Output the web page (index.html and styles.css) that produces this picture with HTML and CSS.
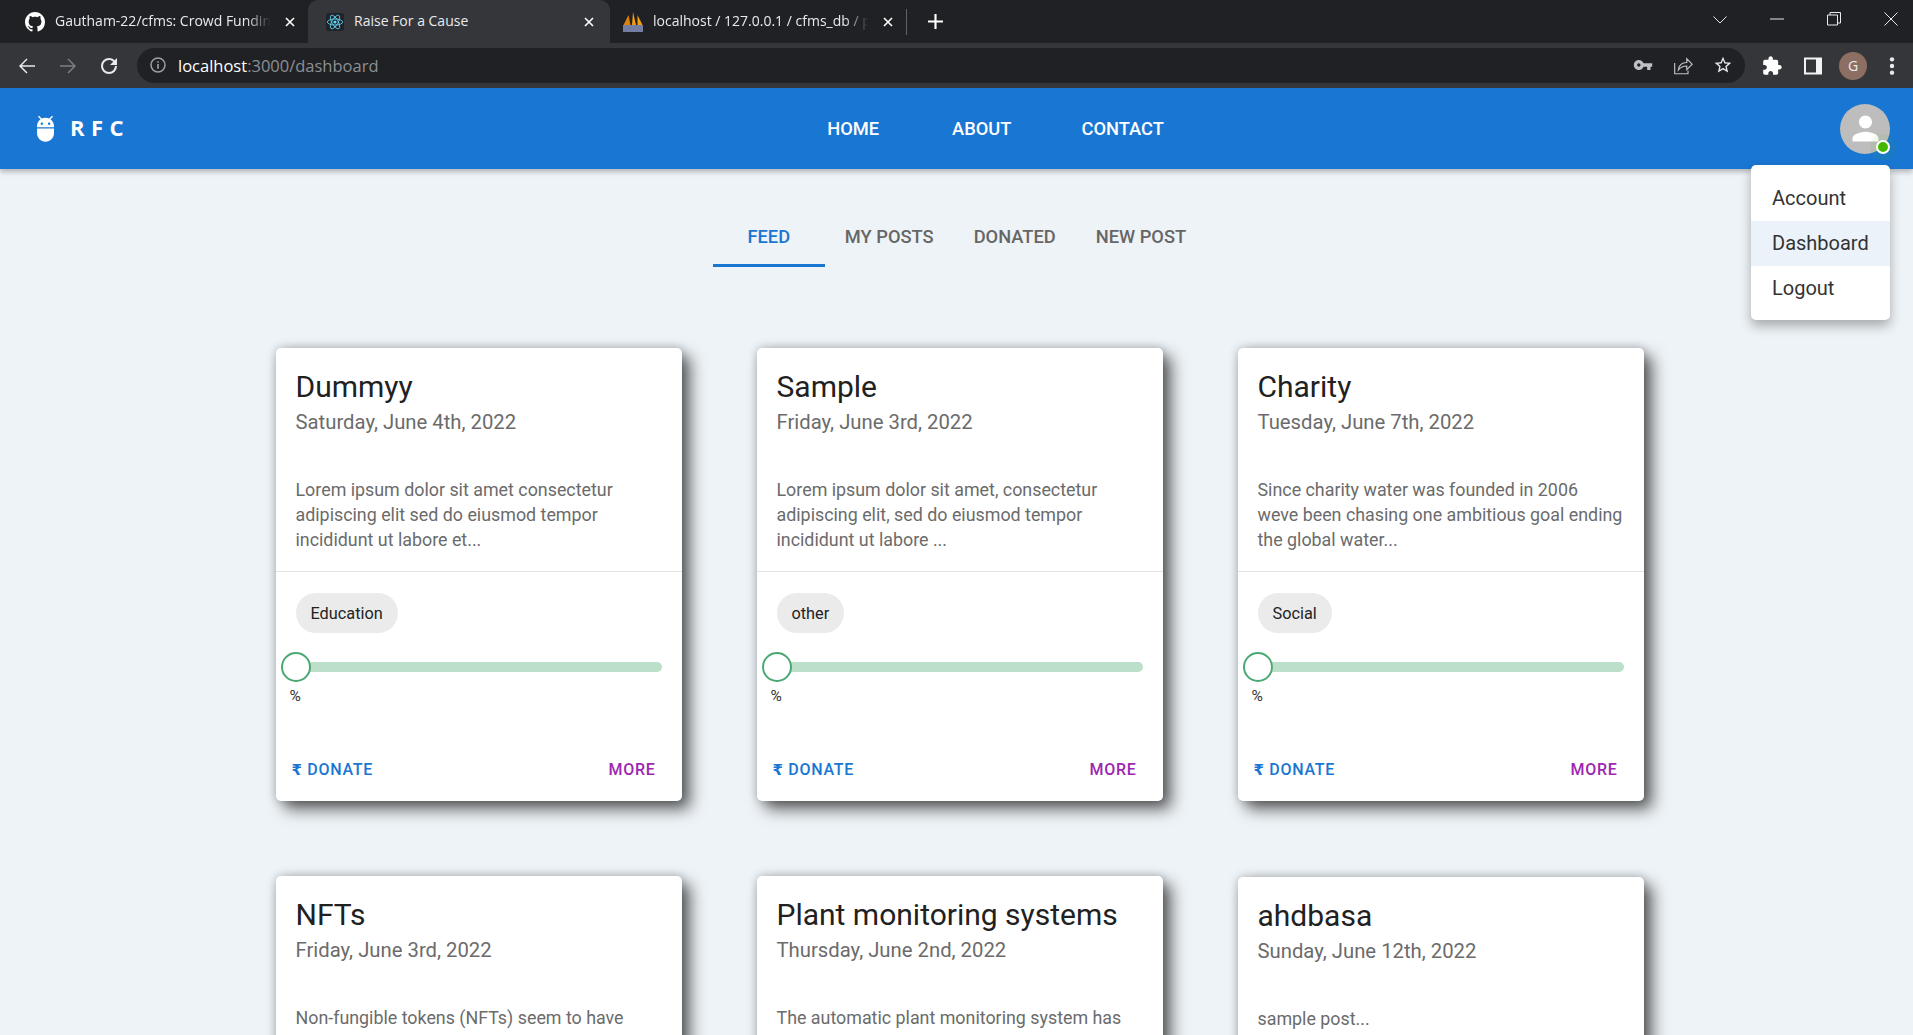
FILE: index.html
```html
<!DOCTYPE html>
<html lang="en">

<head>
    <meta charset="UTF-8">
    <title>Raise For a Cause</title>
    <link rel="stylesheet" href="styles.css">
</head>

<body>
    <div class="browser">
        <div class="tabstrip">
            <div class="btab btab-first">
                <svg class="favicon" viewBox="0 0 16 16"><path fill="#fff" d="M8 0C3.580 0 0 3.580 0 8c0 3.540 2.290 6.530 5.470 7.590.4.070.55-.17.55-.38 0-.19-.01-.82-.01-1.490-2.010.37-2.530-.49-2.690-.94-.09-.23-.48-.94-.82-1.130-.28-.15-.68-.52-.01-.53.63-.01 1.080.58 1.230.82.72 1.210 1.870.87 2.330.66.07-.52.28-.87.51-1.070-1.780-.2-3.640-.89-3.640-3.950 0-.87.31-1.590.82-2.150-.08-.2-.36-1.020.08-2.120 0 0 .67-.21 2.200.82.64-.18 1.320-.27 2-.27.68 0 1.360.09 2 .27 1.530-1.040 2.200-.82 2.200-.82.44 1.100.16 1.920.08 2.120.51.56.82 1.270.82 2.150 0 3.070-1.870 3.750-3.650 3.950.29.25.54.73.54 1.480 0 1.070-.01 1.930-.01 2.200 0 .21.15.46.55.38A8.013 8.013 0 0016 8c0-4.420-3.580-8-8-8z"/></svg>
                <span class="btab-title">Gautham-22/cfms: Crowd Fundin</span>
                <svg class="btab-x" viewBox="0 0 10 10"><path d="M1 1l8 8M9 1l-8 8"/></svg>
            </div>
            <div class="btab btab-active">
                <svg class="favicon react" viewBox="0 0 20 20">
                    <rect width="20" height="20" rx="3" fill="#20232a"/>
                    <circle cx="10" cy="10" r="1.700" fill="#61dafb"/>
                    <g fill="none" stroke="#61dafb" stroke-width=".9">
                        <ellipse cx="10" cy="10" rx="8.500" ry="3.400"/>
                        <ellipse cx="10" cy="10" rx="8.500" ry="3.400" transform="rotate(60 10 10)"/>
                        <ellipse cx="10" cy="10" rx="8.500" ry="3.400" transform="rotate(120 10 10)"/>
                    </g>
                </svg>
                <span class="btab-title">Raise For a Cause</span>
                <svg class="btab-x" viewBox="0 0 10 10"><path d="M1 1l8 8M9 1l-8 8"/></svg>
            </div>
            <div class="btab btab-last">
                <svg class="favicon" viewBox="0 0 20 20">
                    <path fill="#f89c0e" d="M10 0l3 13H9zM14.500 3l5 10h-5z"/>
                    <path fill="#d9820c" d="M5.500 3l2 10H.5z"/>
                    <rect y="13" width="20" height="7" fill="#747ea0"/>
                </svg>
                <span class="btab-title">localhost / 127.0.0.1 / cfms_db / p</span>
                <svg class="btab-x" viewBox="0 0 10 10"><path d="M1 1l8 8M9 1l-8 8"/></svg>
            </div>
            <svg class="newtab" viewBox="0 0 14 14"><path d="M7 0v14M0 7h14"/></svg>
            <div class="winctl">
                <svg class="winicon chevron" viewBox="0 0 14 14"><path d="M.5 3.500L7 10l6.500-6.500"/></svg>
                <svg class="winicon" viewBox="0 0 14 14"><path d="M0 7h14"/></svg>
                <svg class="winicon" viewBox="0 0 14 14"><path d="M.5 3h10v10H.5zM3 3V.5h10.500V11H10.500"/></svg>
                <svg class="winicon" viewBox="0 0 14 14"><path d="M.5.5l13 13M13.500.5l-13 13"/></svg>
            </div>
        </div>
        <div class="toolbar">
            <svg class="tool" viewBox="0 0 24 24"><path fill="#e8eaed" d="M20 11.200H6.800l5.700-5.700-1-1L4 12l7.500 7.500 1-1-5.700-5.700H20z"/></svg>
            <svg class="tool" viewBox="0 0 24 24"><path fill="#7c7f84" d="M4 11.200h13.200l-5.700-5.700 1-1L20 12l-7.500 7.500-1-1 5.700-5.700H4z"/></svg>
            <svg class="tool" viewBox="0 0 24 24"><path fill="#e8eaed" d="M17.650 6.350A7.960 7.960 0 0012 4a8 8 0 108 8h-2a6 6 0 11-6-6c1.660 0 3.140.69 4.220 1.780L13 11h7V4z"/></svg>
            <div class="omnibox">
                <svg class="omni-info" viewBox="0 0 16 16">
                    <circle cx="8" cy="8" r="7" fill="none" stroke="#9aa0a6" stroke-width="1.500"/>
                    <path fill="#9aa0a6" d="M7.200 7h1.600v4.800H7.200zM7.200 4.200h1.600v1.600H7.200z"/>
                </svg>
                <span class="url"><span class="url-host">localhost</span>:3000/dashboard</span>
                <div class="omni-actions">
                    <svg class="omni-icon" viewBox="0 0 24 24"><path fill="#bdc1c6" d="M12.650 10C11.830 7.670 9.610 6 7 6c-3.310 0-6 2.690-6 6s2.690 6 6 6c2.610 0 4.830-1.670 5.650-4H17v4h4v-4h2v-4H12.650zM7 14c-1.100 0-2-.9-2-2s.9-2 2-2 2 .9 2 2-.9 2-2 2z"/></svg>
                    <svg class="omni-icon" viewBox="0 0 24 24"><path fill="none" stroke="#bdc1c6" stroke-width="1.400" d="M2 9.500V22.500h16v-4M6.500 18c.6-5.500 4.500-9 10-9V4.500l6.500 6.500-6.500 6.500v-4.300c-4.400 0-7.600 1.500-10 4.800z"/></svg>
                    <svg class="omni-icon" viewBox="0 0 24 24"><path fill="#e8eaed" d="M22 9.240l-7.190-.62L12 2 9.190 8.630 2 9.240l5.460 4.730L5.820 21 12 17.270 18.180 21l-1.630-7.030L22 9.240zM12 15.400l-3.760 2.270 1-4.280-3.320-2.880 4.380-.38L12 6.100l1.710 4.040 4.380.38-3.320 2.880 1 4.280L12 15.400z"/></svg>
                </div>
            </div>
            <div class="tool-right">
                <svg class="tool puzzle" viewBox="0 0 24 24"><path fill="#fff" d="M20.500 11H19V7c0-1.100-.9-2-2-2h-4V3.500C13 2.120 11.880 1 10.500 1S8 2.120 8 3.500V5H4c-1.100 0-1.990.9-1.990 2v3.800H3.500c1.490 0 2.700 1.210 2.700 2.700s-1.210 2.700-2.700 2.700H2V20c0 1.100.9 2 2 2h3.800v-1.500c0-1.490 1.210-2.700 2.700-2.700 1.490 0 2.700 1.210 2.700 2.700V22H17c1.100 0 2-.9 2-2v-4h1.500c1.380 0 2.500-1.120 2.500-2.500S21.880 11 20.500 11z"/></svg>
                <svg class="tool" viewBox="0 0 24 24"><path fill="#f1f3f4" fill-rule="evenodd" d="M3 3.500h18v17H3zM5 5.500v13h10v-13z"/></svg>
                <span class="profile">G</span>
                <svg class="tool dots" viewBox="0 0 24 24"><circle cx="12" cy="5" r="2.300" fill="#e8eaed"/><circle cx="12" cy="12" r="2.300" fill="#e8eaed"/><circle cx="12" cy="19" r="2.300" fill="#e8eaed"/></svg>
            </div>
        </div>
    </div>

    <div class="page">
        <header class="appbar">
            <div class="logo">
                <svg class="logo-icon" viewBox="0 0 24 24"><path fill="#fff" d="M5 16c0 3.870 3.130 7 7 7s7-3.130 7-7v-4H5v4zM16.120 4.370l2.100-2.100-.82-.83-2.300 2.310C14.160 3.280 13.120 3 12 3s-2.160.28-3.090.75L6.600 1.440l-.82.83 2.100 2.100C6.140 5.640 5 7.680 5 10v1h14v-1c0-2.320-1.140-4.360-2.880-5.630zM9 9c-.55 0-1-.45-1-1s.45-1 1-1 1 .45 1 1-.45 1-1 1zm6 0c-.55 0-1-.45-1-1s.45-1 1-1 1 .45 1 1-.45 1-1 1z"/></svg>
                <span class="logo-text">RFC</span>
            </div>
            <nav class="mainnav">
                <a href="#" class="nav-home">HOME</a>
                <a href="#">ABOUT</a>
                <a href="#">CONTACT</a>
            </nav>
            <div class="avatar">
                <svg viewBox="0 0 24 24"><path fill="#fff" d="M12 12c2.210 0 4-1.790 4-4s-1.790-4-4-4-4 1.790-4 4 1.790 4 4 4zm0 2c-2.670 0-8 1.340-8 4v2h16v-2c0-2.660-5.330-4-8-4z"/></svg>
                <span class="online"></span>
            </div>
        </header>

        <ul class="usermenu">
            <li>Account</li>
            <li class="hover">Dashboard</li>
            <li>Logout</li>
        </ul>

        <div class="tabs">
            <a href="#" class="tab tab-on">FEED</a>
            <a href="#" class="tab">MY POSTS</a>
            <a href="#" class="tab">DONATED</a>
            <a href="#" class="tab">NEW POST</a>
        </div>

        <section class="grid">
            <article class="card">
                <h2>Dummyy</h2>
                <p class="date">Saturday, June 4th, 2022</p>
                <p class="desc">Lorem ipsum dolor sit amet consectetur adipiscing elit sed do eiusmod tempor incididunt ut labore et...</p>
                <hr>
                <span class="chip">Education</span>
                <div class="slider"><span class="thumb"></span></div>
                <span class="pct">%</span>
                <div class="actions">
                    <a href="#" class="donate"><span class="rupee">₹</span> DONATE</a>
                    <a href="#" class="more">MORE</a>
                </div>
            </article>
            <article class="card">
                <h2>Sample</h2>
                <p class="date">Friday, June 3rd, 2022</p>
                <p class="desc">Lorem ipsum dolor sit amet, consectetur adipiscing elit, sed do eiusmod tempor incididunt ut labore ...</p>
                <hr>
                <span class="chip">other</span>
                <div class="slider"><span class="thumb"></span></div>
                <span class="pct">%</span>
                <div class="actions">
                    <a href="#" class="donate"><span class="rupee">₹</span> DONATE</a>
                    <a href="#" class="more">MORE</a>
                </div>
            </article>
            <article class="card">
                <h2>Charity</h2>
                <p class="date">Tuesday, June 7th, 2022</p>
                <p class="desc">Since charity water was founded in 2006<br>weve been chasing one ambitious goal ending the global water...</p>
                <hr>
                <span class="chip">Social</span>
                <div class="slider"><span class="thumb"></span></div>
                <span class="pct">%</span>
                <div class="actions">
                    <a href="#" class="donate"><span class="rupee">₹</span> DONATE</a>
                    <a href="#" class="more">MORE</a>
                </div>
            </article>
            <article class="card">
                <h2>NFTs</h2>
                <p class="date">Friday, June 3rd, 2022</p>
                <p class="desc">Non-fungible tokens (NFTs) seem to have</p>
            </article>
            <article class="card">
                <h2>Plant monitoring systems</h2>
                <p class="date">Thursday, June 2nd, 2022</p>
                <p class="desc">The automatic plant monitoring system has</p>
            </article>
            <article class="card card-low">
                <h2>ahdbasa</h2>
                <p class="date">Sunday, June 12th, 2022</p>
                <p class="desc">sample post...</p>
            </article>
        </section>
    </div>
</body>

</html>
```

FILE: styles.css
```css
html,
body {
    height: 1035px;
    margin: 0;
    overflow: hidden;
}

body {
    display: flex;
    flex-direction: column;
    background: #eef3f7;
    font-family: Roboto, "Liberation Sans", sans-serif;
}

a {
    text-decoration: none;
    color: inherit;
}

/* browser frame */
.browser {
    flex: none;
    font-family: "Open Sans", Roboto, sans-serif;
}

.tabstrip {
    display: flex;
    align-items: center;
    height: 43px;
    padding-left: 8px;
    background: #202124;
}

.btab {
    display: flex;
    align-items: center;
    box-sizing: border-box;
    height: 43px;
    padding: 0 13px 0 17px;
    color: #e8eaed;
    font-size: 14px;
}

.btab-first {
    width: 300px;
}

.btab-active {
    width: 302px;
    padding: 0 16px 0 18px;
    background: #35363a;
    border-radius: 10px 10px 0 0;
}

.btab-last {
    width: 297px;
    height: 26px;
    padding-left: 13px;
    border-right: 1px solid #5f6368;
}

.favicon {
    flex: none;
    width: 20px;
    height: 20px;
    margin-right: 10px;
}

.react {
    width: 18px;
    height: 18px;
}

.btab-title {
    flex: 1;
    margin-top: -2px;
    overflow: hidden;
    white-space: nowrap;
    -webkit-mask-image: linear-gradient(to right, #000 88%, transparent 99%);
    mask-image: linear-gradient(to right, #000 88%, transparent 99%);
}

.btab-active .btab-title {
    -webkit-mask-image: none;
    mask-image: none;
}

.btab-x {
    flex: none;
    width: 10px;
    height: 10px;
    margin-left: 12px;
    fill: none;
    stroke: #fff;
    stroke-width: 1.600;
}

.newtab {
    width: 15px;
    height: 15px;
    margin-left: 21px;
    fill: none;
    stroke: #fff;
    stroke-width: 2;
}

.winctl {
    display: flex;
    align-items: center;
    gap: 43px;
    margin: -6px 15px 0 auto;
}

.winicon {
    width: 14px;
    height: 14px;
    fill: none;
    stroke: #e8eaed;
    stroke-width: 1;
}

.chevron {
    margin-top: 2px;
}

.toolbar {
    display: flex;
    align-items: center;
    gap: 17px;
    height: 45px;
    padding: 0 9px 0 15px;
    background: #35363a;
}

.tool {
    flex: none;
    width: 24px;
    height: 24px;
}

.omnibox {
    flex: 1;
    display: flex;
    align-items: center;
    height: 35px;
    margin: -1px 0 0 -1px;
    padding: 0 12px 0 13px;
    border-radius: 18px;
    background: #202124;
}

.omni-info {
    width: 16px;
    height: 16px;
    margin-right: 12px;
}

.url {
    color: #8c9095;
    font-size: 16.500px;
}

.url-host {
    color: #fff;
}

.omni-actions {
    display: flex;
    gap: 20px;
    margin-left: auto;
}

.omni-icon {
    width: 20px;
    height: 20px;
}

.tool-right {
    display: flex;
    align-items: center;
    gap: 14px;
    margin-left: -2px;
}

.puzzle {
    margin-right: 3px;
    transform: scale(.88);
}

.dots {
    margin-left: -1px;
    transform: scale(.95);
}

.profile {
    width: 28px;
    height: 28px;
    border-radius: 50%;
    background: #8d6e63;
    color: #eee;
    font-size: 14px;
    line-height: 28px;
    text-align: center;
}

/* app */
.page {
    position: relative;
    flex: 1;
    overflow: hidden;
}

.appbar {
    position: relative;
    z-index: 1;
    display: flex;
    align-items: center;
    justify-content: space-between;
    height: 81px;
    padding: 0 23px 0 31px;
    background: #1976d2;
    box-shadow: 0 3px 5px rgba(0, 0, 0, .25);
    color: #fff;
}

.logo {
    display: flex;
    align-items: center;
    width: 150px;
}

.logo-icon {
    width: 29px;
    height: 29px;
    margin-right: 10px;
}

.logo-text {
    margin-top: -3px;
    font-family: "Open Sans", Roboto, sans-serif;
    font-size: 22px;
    font-weight: 700;
    letter-spacing: 6.500px;
}

.mainnav {
    display: flex;
    gap: 70px;
    margin-left: -30px;
    font-size: 18.300px;
    font-weight: 500;
}

.nav-home {
    margin-right: 3px;
}

.avatar {
    position: relative;
    display: flex;
    align-items: center;
    justify-content: center;
    width: 50px;
    height: 50px;
    border-radius: 50%;
    background: #bdbdbd;
}

.avatar svg {
    width: 39px;
    height: 39px;
}

.online {
    position: absolute;
    right: 0;
    bottom: 0;
    width: 10px;
    height: 10px;
    border: 2px solid #fff;
    border-radius: 50%;
    background: #44b700;
    box-shadow: 0 0 0 6px rgba(68, 183, 0, .08);
}

.usermenu {
    position: absolute;
    top: 77px;
    right: 23px;
    z-index: 2;
    width: 139px;
    margin: 0;
    padding: 11px 0 9px;
    list-style: none;
    background: #fff;
    border-radius: 5px;
    box-shadow: 0 6px 12px rgba(0, 0, 0, .3);
    color: #333;
    font-size: 20px;
}

.usermenu li {
    height: 45px;
    padding-left: 21px;
    line-height: 45px;
}

.usermenu .hover {
    background: #ebf2fa;
}

.tabs {
    display: flex;
    justify-content: center;
    height: 60px;
    margin: 38px 0 81px;
    padding-left: 6px;
    color: #666;
    font-size: 18.300px;
    font-weight: 500;
}

.tab {
    box-sizing: border-box;
    min-width: 112px;
    padding: 19px 20px 0;
    text-align: center;
}

.tab-on {
    color: #1976d2;
    border-bottom: 3px solid #1976d2;
}

.grid {
    display: grid;
    grid-template-columns: repeat(3, 406px);
    justify-content: center;
    gap: 75px;
    padding-left: 6px;
}

.card {
    display: flex;
    flex-direction: column;
    align-items: flex-start;
    box-sizing: border-box;
    height: 453px;
    padding: 21px 20px 0;
    background: #fff;
    border-radius: 5px;
    box-shadow: 8px 8px 16px rgba(0, 0, 0, .62), 0 0 10px rgba(0, 0, 0, .22);
}

.card-low {
    margin-top: 1px;
}

.card h2 {
    margin: 0;
    color: #212121;
    font-size: 30px;
    font-weight: 400;
    line-height: 36px;
}

.date {
    margin: 2px 0 0;
    color: #6b6b6b;
    font-size: 20.300px;
    line-height: 30px;
}

.desc {
    margin: 40px -1px 0 0;
    color: #6b6b6b;
    font-size: 17.850px;
    line-height: 25px;
}

.card hr {
    align-self: stretch;
    margin: 18.500px -20px 0;
    border: 0;
    border-top: 1px solid #e3e3e3;
}

.chip {
    height: 40px;
    margin-top: 21.500px;
    padding: 0 15px;
    border-radius: 20px;
    background: #ebebeb;
    color: #222;
    font-size: 16.300px;
    line-height: 41px;
}

.slider {
    position: relative;
    align-self: stretch;
    height: 10px;
    margin-top: 29px;
    border-radius: 5px;
    background: #bbdfc9;
}

.thumb {
    position: absolute;
    top: -10px;
    left: -15px;
    box-sizing: border-box;
    width: 30px;
    height: 30px;
    border: 2px solid #4aa873;
    border-radius: 50%;
    background: #fff;
}

.pct {
    margin: 13.500px 0 0 -6px;
    color: #333;
    font-size: 15.500px;
    line-height: 20px;
}

.actions {
    align-self: stretch;
    display: flex;
    justify-content: space-between;
    margin: auto -20px 0;
    padding: 0 26px 19px 16px;
    font-size: 16px;
    font-weight: 500;
    letter-spacing: .7px;
    line-height: 24px;
}

.donate {
    color: #1976d2;
}

.rupee {
    font-family: "DejaVu Sans", sans-serif;
    font-size: 15px;
    font-weight: 700;
}

.more {
    color: #9c27b0;
}
```
